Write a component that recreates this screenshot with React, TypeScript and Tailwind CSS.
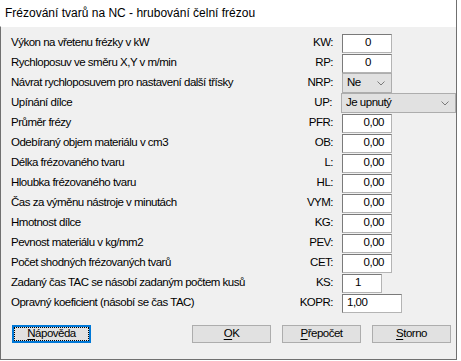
import React from "react";

type Row = {
  label: string;
  code: string;
  kind: "num" | "dec" | "select" | "ks" | "kopr";
  value: string;
  wide?: boolean;
};

const rows: Row[] = [
  { label: "Výkon na vřetenu frézky v kW", code: "KW:", kind: "num", value: "0" },
  { label: "Rychloposuv ve směru X,Y v m/min", code: "RP:", kind: "num", value: "0" },
  { label: "Návrat rychloposuvem pro nastavení další třísky", code: "NRP:", kind: "select", value: "Ne" },
  { label: "Upínání dílce", code: "UP:", kind: "select", value: "Je upnutý", wide: true },
  { label: "Průměr frézy", code: "PFR:", kind: "dec", value: "0,00" },
  { label: "Odebíraný objem materiálu v cm3", code: "OB:", kind: "dec", value: "0,00" },
  { label: "Délka frézovaného tvaru", code: "L:", kind: "dec", value: "0,00" },
  { label: "Hloubka frézovaného tvaru", code: "HL:", kind: "dec", value: "0,00" },
  { label: "Čas za výměnu nástroje v minutách", code: "VYM:", kind: "dec", value: "0,00" },
  { label: "Hmotnost dílce", code: "KG:", kind: "dec", value: "0,00" },
  { label: "Pevnost materiálu v kg/mm2", code: "PEV:", kind: "dec", value: "0,00" },
  { label: "Počet shodných frézovaných tvarů", code: "CET:", kind: "dec", value: "0,00" },
  { label: "Zadaný čas TAC se násobí zadaným počtem kusů", code: "KS:", kind: "ks", value: "1" },
  { label: "Opravný koeficient (násobí se čas TAC)", code: "KOPR:", kind: "kopr", value: "1,00" },
];

const Chevron = () => (
  <svg width="8" height="5" viewBox="0 0 8 5" className="shrink-0">
    <path d="M0.5 0.5 L4 4 L7.5 0.5" fill="none" stroke="#7a7a7a" strokeWidth="1" />
  </svg>
);

const editBox =
  "h-[19px] bg-white border border-[#b4b4b4] border-t-[#7a7a7a] border-l-[#7a7a7a] flex items-center";

const Field: React.FC<{ row: Row }> = ({ row }) => {
  if (row.kind === "select") {
    return (
      <div
        className={`${row.wide ? "w-[115px]" : "w-[50px]"} h-[20px] bg-[#e1e1e1] border border-[#adadad] flex items-center justify-between pl-[4px] pr-[6px]`}
      >
        <span>{row.value}</span>
        <Chevron />
      </div>
    );
  }
  if (row.kind === "num") {
    return <div className={`${editBox} w-[50px] justify-center pl-[2px]`}>{row.value}</div>;
  }
  if (row.kind === "dec") {
    return <div className={`${editBox} w-[50px] justify-end pr-[7px]`}>{row.value}</div>;
  }
  if (row.kind === "ks") {
    return <div className={`${editBox} w-[40px] pl-[12px]`}>{row.value}</div>;
  }
  return <div className={`${editBox} w-[60px] pl-[4px]`}>{row.value}</div>;
};

const Btn: React.FC<{ first: string; rest: string; focused?: boolean }> = ({ first, rest, focused }) => (
  <div
    className={`w-[79px] h-[18px] bg-[#e1e1e1] border flex items-center justify-center ${
      focused ? "border-[#0078d7] border-2" : "border-[#adadad]"
    }`}
  >
    <div
      className={`w-full h-full flex items-center justify-center ${
        focused ? "border border-dotted border-black" : ""
      }`}
    >
      <span>
        <span className="underline underline-offset-2">{first}</span>
        {rest}
      </span>
    </div>
  </div>
);

export default function App() {
  return (
    <div className="w-[461px] h-[361px] bg-white text-black" style={{ fontFamily: '"Liberation Sans", Arial, sans-serif' }}>
      <div className="w-[457px] h-[360px] border-r border-[#707070] flex flex-col">
        <div className="h-[26px] pl-[5px] flex items-center text-[12px] text-black">
          Frézování tvarů na NC - hrubování čelní frézou
        </div>
        <div className="flex-1 bg-[#f0f0f0] border-l border-b border-[#707070] border-t border-t-white pt-[6px] pl-[10px] text-[11.5px] tracking-[-0.5px] leading-none">
          <div className="flex flex-col">
            {rows.map((r) => (
              <div key={r.code} className="h-[20px] flex items-center">
                <div className="w-[262px] whitespace-nowrap">{r.label}</div>
                <div className="w-[60px] text-right">{r.code}</div>
                <div className="ml-[9px]">
                  <Field row={r} />
                </div>
              </div>
            ))}
          </div>
          <div className="flex mt-[12px] ml-[1px]">
            <Btn first="N" rest="ápověda" focused />
            <div className="ml-[101px] flex gap-[11px]">
              <Btn first="O" rest="K" />
              <Btn first="P" rest="řepočet" />
              <Btn first="S" rest="torno" />
            </div>
          </div>
        </div>
      </div>
    </div>
  );
}
